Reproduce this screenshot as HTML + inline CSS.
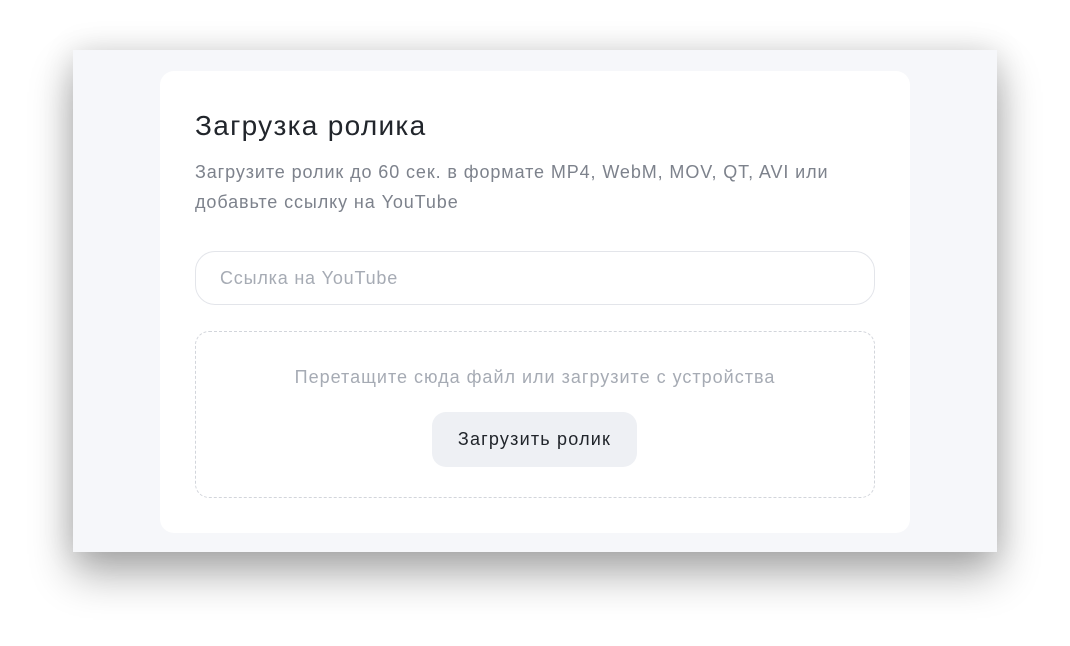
<!DOCTYPE html>
<html><head><meta charset="utf-8"><style>
html,body{margin:0;padding:0;width:1070px;height:646px;background:#fff;overflow:hidden;font-family:"Liberation Sans","DejaVu Sans",sans-serif;}
.panel{position:absolute;left:73px;top:50px;width:924px;height:502px;background:#f6f7fa;box-shadow:0 22px 40px rgba(0,0,0,.32),0 0 30px rgba(0,0,0,.12);}
.card{position:absolute;left:87px;top:21px;width:750px;height:462px;background:#fff;border-radius:14px;}
.title{position:absolute;left:35px;top:39px;font-size:28px;letter-spacing:1.3px;color:#21252b;}
.sub{position:absolute;left:35px;top:86px;font-size:18px;letter-spacing:0.9px;line-height:30px;color:#7d828c;width:650px;}
.input{position:absolute;left:35px;top:180px;width:678px;height:52px;border:1px solid #e3e5ea;border-radius:20px;}
.input span{position:absolute;left:24px;top:16px;font-size:18px;letter-spacing:0.8px;color:#a6abb4;}
.drop{position:absolute;left:35px;top:260px;width:678px;height:165px;border:1px dashed #d2d5db;border-radius:14px;}
.drop .t{position:absolute;left:0;right:0;top:35px;text-align:center;font-size:18px;letter-spacing:1px;color:#a6abb4;}
.btn{position:absolute;left:236px;top:80px;width:205px;height:55px;background:#eef0f4;border-radius:14px;text-align:center;line-height:55px;font-size:18px;letter-spacing:1.2px;color:#21252b;}
</style></head><body>
<div class="panel"><div class="card">
<div class="title">Загрузка ролика</div>
<div class="sub">Загрузите ролик до 60 сек. в формате MP4, WebM, MOV, QT, AVI или<br>добавьте ссылку на YouTube</div>
<div class="input"><span>Ссылка на YouTube</span></div>
<div class="drop"><div class="t">Перетащите сюда файл или загрузите с устройства</div><div class="btn">Загрузить ролик</div></div>
</div></div>
</body></html>
